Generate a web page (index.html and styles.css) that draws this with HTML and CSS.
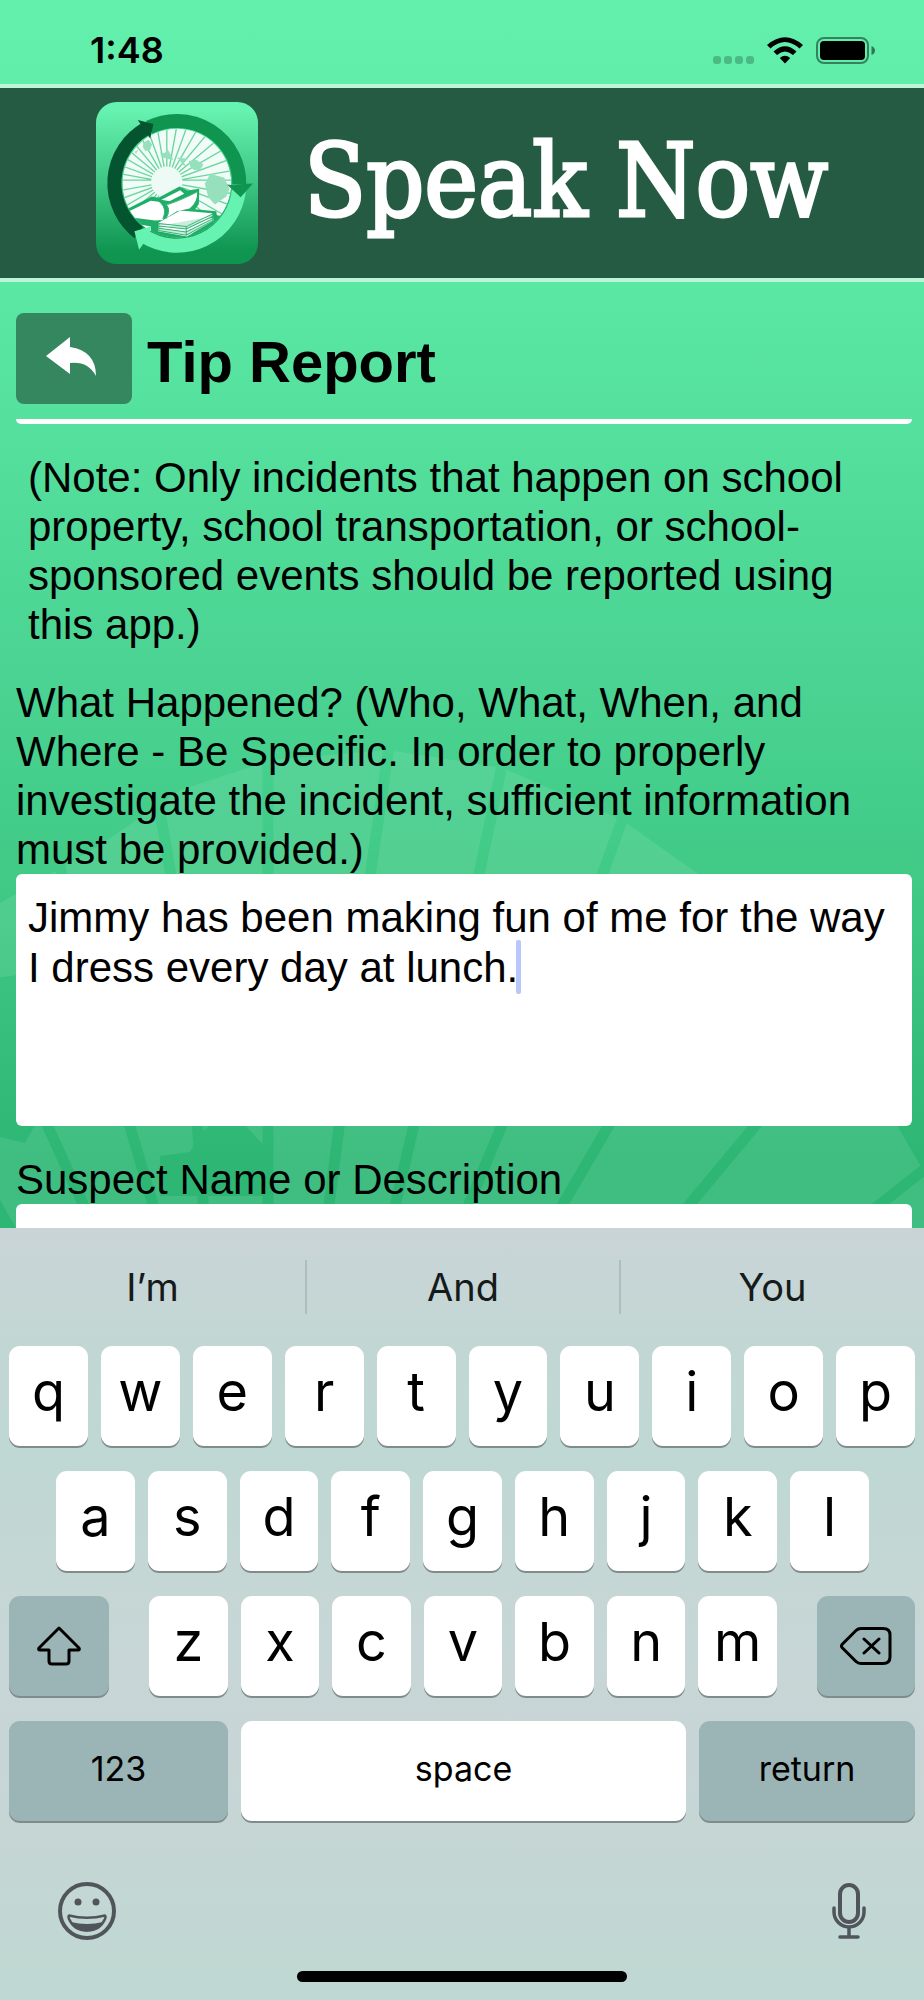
FILE: index.html
```html
<!DOCTYPE html>
<html lang="en">

<head>
    <meta charset="UTF-8">
    <meta name="viewport" content="width=device-width, initial-scale=1.0">
    <title>Speak Now - Tip Report</title>
    <link rel="stylesheet" href="styles.css">
</head>

<body>
    <div class="screen">
        <!-- faint sun rays behind the form -->
        <svg class="backdrop" viewBox="0 0 924 2000" preserveAspectRatio="xMidYMin slice" aria-hidden="true">
            <mask id="rays">
                <path fill="#fff" d="M-60 940L0 903 100 845 180 790 272 760 388 750 503 768 622 820 735 900 894 1120 920 1165 960 1228H-60Z" />
                <g stroke="#000" stroke-width="11" fill="none">
                    <path d="M268 740V1228M390 740L371 870 340 1120 326 1228M503 760L480 870 415 1120 390 1228M624 815L604 870 504 1120 459 1228M735 900L612 1120 549 1228M894 960L760 1120 670 1228M930 1165L850 1228" />
                    <path d="M158 800L170 870 197 1120 205 1228M50 830L128 1120 160 1228M-20 960L45 1120 94 1228" />
                </g>
                <path fill="#000" d="M-60 985L17 975 38 1120 25 1143 0 1137H-60ZM0 1200L16 1228H0ZM200 1134L222 1115H236L265 1147V1196H160V1156L190 1152Z" />
            </mask>
            <rect width="924" height="1228" fill="#fff" fill-opacity="0.09" mask="url(#rays)" />
        </svg>

        <div class="status-bar">
            <span class="time">1:48</span>
            <div class="status-icons">
                <span class="signal"><i></i><i></i><i></i><i></i></span>
                <svg class="wifi" width="36" height="27" viewBox="0 0 36 27">
                    <path d="M0 8Q18-7.500 36 8L32.500 11.500Q18-1.500 3.500 11.500ZM6.500 14.500Q18 4 29.500 14.500L26 18Q18 11 10 18ZM12.800 21Q18 16.500 23.200 21L18 26.500Z" />
                </svg>
                <svg class="battery" width="60" height="27" viewBox="0 0 60 27">
                    <rect x="1" y="1" width="51" height="25" rx="7" fill="none" stroke="#000" stroke-opacity="0.45" stroke-width="2" />
                    <rect x="4" y="4" width="45" height="19" rx="4" />
                    <path d="M55.500 9Q59 10.500 59 13.500T55.500 18Z" fill-opacity="0.5" />
                </svg>
            </div>
        </div>

        <header class="header">
            <svg class="logo" viewBox="48 35 485 485" role="img" aria-label="Speak Now logo">
                <defs>
                    <linearGradient id="tile" x1="0" y1="0" x2="0" y2="1">
                        <stop offset="0.050" stop-color="#66f2b0" />
                        <stop offset="0.500" stop-color="#3dc584" />
                        <stop offset="0.920" stop-color="#0f9550" />
                    </linearGradient>
                    <clipPath id="disc">
                        <circle cx="290" cy="278" r="163" />
                    </clipPath>
                </defs>
                <rect x="48" y="35" width="485" height="485" rx="62" fill="url(#tile)" />
                <g clip-path="url(#disc)">
                    <circle cx="290" cy="278" r="163" fill="#f1fbf7" />
                    <g transform="translate(260 275)" stroke="#69d69d" stroke-width="4">
                        <path d="M-240-6H240M0-240V240M-236-42L236 42M-226-82L226 82M-208-120L208 120M-184-154L184 154M-154-184L154 184M-120-208L120 208M-82-226L82 226M-42-236L42 236M236-42L-236 42M226-82L-226 82M208-120L-208 120M184-154L-184 154M154-184L-154 184M120-208L-120 208M82-226L-82 226M42-236L-42 236" />
                    </g>
                    <circle cx="260" cy="275" r="47" fill="#eefaf5" />
                    <!-- islands -->
                    <path fill="#96e0bd" d="M190 156L205 148 216 162 210 178 196 182 188 170ZM240 186L254 188 262 176 270 190 280 208 262 206 244 200ZM290 202L320 204 318 210 308 212 318 228 306 222 300 210ZM326 212L348 208 370 222 358 240 340 238 330 228ZM164 184L175 178 168 190ZM390 250L432 262 448 295 438 318 404 342 384 320 374 280Z" />
                    <!-- books -->
                    <path fill="#1fae68" d="M140 356L215 318 235 322 298 288 322 300 357 295 356 340 345 356 408 362 410 374 440 378 410 400 400 460H210L212 424 150 404Z" />
                    <path fill="#fff" d="M130 370L212 331 236 334Q262 352 248 388L225 390 150 380ZM244 328L300 299 312 310 268 332ZM260 342Q300 330 351 304 352 336 328 354L290 362 256 384Q274 360 260 342ZM236 396L300 360 396 368 400 390 320 438 234 422ZM180 402L212 408V424Z" />
                    <path fill="#c8eedb" stroke="#35b377" stroke-width="3" d="M236 399L318 408 398 370V390L318 434 236 420ZM236 406L318 415 398 377M236 413L318 424 398 384M318 408V434" />
                    <path fill="none" stroke="#35b377" stroke-width="3" d="M240 334Q262 354 248 386M254 338Q274 358 258 384M262 342Q300 330 351 304" />
                </g>
                <g fill="none" stroke-width="42">
                    <path stroke="#0f9550" d="M207 111A187 187 0 0 1 477 282" />
                    <path stroke="#66f2b0" d="M476 300A187 187 0 0 1 190 436" />
                    <path stroke="#04552f" d="M176 426A187 187 0 0 1 196 116" />
                </g>
                <path fill="#04552f" d="M173 89L220 101 210 144 199 126Z" />
                <path fill="#0f9550" d="M440 282L460 284 500 280 518 279 481 320Z" />
                <path fill="#66f2b0" d="M163 422L212 408 207 438 191 458 177 477Z" />
            </svg>
            <span class="brand">Speak Now</span>
        </header>

        <main class="form-area">
            <div class="page-title">
                <button class="back" type="button" aria-label="Back">
                    <svg width="52" height="40" viewBox="0 0 52 40">
                        <path fill="#fff" d="M0 19L24 0V10Q50 14 50 39 42 24 24 26V37Z" />
                    </svg>
                </button>
                <h1>Tip Report</h1>
            </div>
            <hr>
            <p class="note">(Note: Only incidents that happen on school property, school transportation, or school-sponsored events should be reported using this app.)</p>

            <label for="what">What Happened? (Who, What, When, and Where - Be Specific. In order to properly investigate the incident, sufficient information must be provided.)</label>
            <div class="field">
                <textarea id="what">Jimmy has been making fun of me for the way I dress every day at lunch.</textarea>
                <span class="caret"></span>
            </div>

            <label for="suspect">Suspect Name or Description</label>
            <input id="suspect" type="text">
        </main>

        <div class="keyboard">
            <div class="suggestions">
                <button type="button">I’m</button>
                <button type="button">And</button>
                <button type="button">You</button>
            </div>
            <div class="keys">
                <div class="row">
                    <button type="button">q</button>
                    <button type="button">w</button>
                    <button type="button">e</button>
                    <button type="button">r</button>
                    <button type="button">t</button>
                    <button type="button">y</button>
                    <button type="button">u</button>
                    <button type="button">i</button>
                    <button type="button">o</button>
                    <button type="button">p</button>
                </div>
                <div class="row row-home">
                    <button type="button">a</button>
                    <button type="button">s</button>
                    <button type="button">d</button>
                    <button type="button">f</button>
                    <button type="button">g</button>
                    <button type="button">h</button>
                    <button type="button">j</button>
                    <button type="button">k</button>
                    <button type="button">l</button>
                </div>
                <div class="row-shift">
                    <button class="fn" type="button" aria-label="Shift">
                        <svg width="46" height="40" viewBox="0 0 46 40" fill="none" stroke="#000" stroke-width="3" stroke-linejoin="round">
                            <path d="M23 2L43 22Q44 24 42 24H33V35Q33 38 30 38H16Q13 38 13 35V24H4Q2 24 3 22Z" />
                        </svg>
                    </button>
                    <div class="row">
                        <button type="button">z</button>
                        <button type="button">x</button>
                        <button type="button">c</button>
                        <button type="button">v</button>
                        <button type="button">b</button>
                        <button type="button">n</button>
                        <button type="button">m</button>
                    </div>
                    <button class="fn" type="button" aria-label="Delete">
                        <svg width="52" height="38" viewBox="0 0 52 38" fill="none" stroke="#000" stroke-width="3" stroke-linecap="round" stroke-linejoin="round">
                            <path d="M21 1.500H43Q50 1.500 50 8V30Q50 36.500 43 36.500H21Q18 36.500 16 34.500L2 20.500Q1 19 2 17.500L16 3.500Q18 1.500 21 1.500ZM24 12L39 26M39 12L24 26" />
                        </svg>
                    </button>
                </div>
                <div class="row-space">
                    <button class="fn" type="button">123</button>
                    <button type="button">space</button>
                    <button class="fn" type="button">return</button>
                </div>
            </div>
            <div class="dock">
                <button type="button" aria-label="Emoji">
                    <svg width="58" height="58" viewBox="0 0 58 58">
                        <circle cx="29" cy="29" r="27" fill="none" stroke="#50555c" stroke-width="4" />
                        <circle cx="20" cy="20" r="3.500" fill="#50555c" />
                        <circle cx="38" cy="20" r="3.500" fill="#50555c" />
                        <path d="M11 33.500Q29 38 47 33.500 48 34 47 37 42 48.500 29 48.500T11 37Q10 34 11 33.500Z" fill="none" stroke="#50555c" stroke-width="2.500" stroke-linejoin="round" />
                        <path d="M13 40Q29 44 45 40 40 49.500 29 49.500T13 40Z" fill="#50555c" />
                    </svg>
                </button>
                <button type="button" aria-label="Dictate">
                    <svg width="34" height="56" viewBox="0 0 34 56" fill="none" stroke="#50555c" stroke-width="4" stroke-linecap="round">
                        <rect x="8" y="2" width="18" height="37" rx="9" />
                        <path d="M2 25V29A15 15 0 0 0 32 29V25M17 45V53M8 54H26" stroke-width="3.500" />
                    </svg>
                </button>
            </div>
            <div class="home-indicator"></div>
        </div>
    </div>
</body>

</html>
```

FILE: styles.css
```css
* {
    box-sizing: border-box;
}

body {
    margin: 0;
    font-family: "Liberation Sans", Arial, sans-serif;
    color: #000;
}

button {
    margin: 0;
    padding: 0;
    border: 0;
    background: none;
    color: inherit;
    font: inherit;
}

svg {
    display: block;
}

.screen {
    position: relative;
    display: flex;
    flex-direction: column;
    height: 100vh;
    overflow: hidden;
    background: linear-gradient(#63f0ac 0%, #5ceaa5 12%, #4bd493 33%, #40ca86 44%, #2eb774 58%, #2eb774 100%);
}

.backdrop {
    position: absolute;
    top: 0;
    left: 0;
    width: 100%;
    height: 100%;
}

.status-bar,
.header,
.form-area,
.keyboard {
    position: relative;
}

/* status bar */

.status-bar {
    display: flex;
    justify-content: space-between;
    align-items: center;
    height: 84px;
    padding: 16px 48px 0 90px;
    flex-shrink: 0;
}

.time {
    font-family: Inter, sans-serif;
    font-size: 36px;
    font-weight: 600;
}

.status-icons {
    display: flex;
    align-items: flex-end;
}

.signal {
    display: flex;
    gap: 3px;
    margin-right: 13px;
}

.signal i {
    width: 8px;
    height: 8px;
    border-radius: 3px;
    background: rgba(0, 0, 0, 0.22);
}

.wifi {
    margin-right: 13px;
}

/* header */

.header {
    display: flex;
    justify-content: center;
    align-items: center;
    gap: 46px;
    height: 198px;
    flex-shrink: 0;
    border-top: 4px solid #bdf5d9;
    border-bottom: 4px solid #bdf5d9;
    background: #255b42;
}

.logo {
    width: 162px;
    height: 162px;
}

.brand {
    padding-bottom: 4px;
    font-family: "DejaVu Serif Condensed", "DejaVu Serif", serif;
    font-size: 101px;
    line-height: 120px;
    color: #fff;
    -webkit-text-stroke: 3px #fff;
    white-space: nowrap;
}

/* form */

.form-area {
    flex: 1;
    min-height: 0;
    overflow: hidden;
    padding: 31px 12px 0 16px;
    font-size: 42px;
    line-height: 49px;
}

.page-title {
    display: flex;
    align-items: center;
    gap: 15px;
}

.back {
    display: flex;
    justify-content: center;
    align-items: center;
    width: 116px;
    height: 91px;
    padding: 0 4px 4px 0;
    border-radius: 8px;
    background: #35875f;
}

h1 {
    margin: 0;
    padding-top: 6px;
    font-size: 58px;
    line-height: 66px;
}

hr {
    height: 5px;
    margin: 15px 0 29px;
    border: 0;
    border-radius: 0 0 6px 6px;
    background: #fff;
}

.note {
    margin: 0 12px 29px;
}

label {
    display: block;
}

.field {
    position: relative;
    margin-bottom: 29px;
}

textarea,
input {
    display: block;
    width: 100%;
    border: 0;
    border-radius: 6px;
    outline: 0;
    background: #fff;
    color: #000;
    font-family: inherit;
    font-size: 42px;
    line-height: 50px;
}

textarea {
    height: 252px;
    padding: 19px 12px;
    overflow: hidden;
    resize: none;
}

input {
    height: 78px;
    padding: 0 12px;
}

.caret {
    position: absolute;
    top: 66px;
    left: 500px;
    width: 5px;
    height: 54px;
    border-radius: 2px;
    background: #b9c7fa;
}

/* keyboard */

.keyboard {
    height: 772px;
    flex-shrink: 0;
    background: linear-gradient(#cad4d7 0%, #c2d7d4 15%, #bfd8d3 29%, #c7d6d6 53%, #c8d5d6 68%, #bfd8d2 100%);
    font-family: Inter, sans-serif;
}

.suggestions {
    display: grid;
    grid-template-columns: 33fr 34fr 33fr;
    align-items: center;
    height: 118px;
}

.suggestions button {
    height: 54px;
    color: #151a1a;
    font-size: 38px;
}

.suggestions button + button {
    border-left: 2px solid #adbebe;
}

.keys {
    display: flex;
    flex-direction: column;
    gap: 25px;
    padding: 0 9px;
}

.keys button {
    display: flex;
    justify-content: center;
    align-items: center;
    height: 100px;
    border-radius: 11px;
    background: #fff;
    box-shadow: 0 2px #808c8c;
}

.keys .fn {
    background: #9bb4b5;
}

.row {
    display: flex;
    gap: 13px;
}

.row button {
    flex: 1;
    padding-bottom: 10px;
    font-size: 54px;
}

.row-home {
    padding: 0 46px 0 47px;
}

.row-shift {
    display: grid;
    grid-template-columns: 100fr 628fr 98fr;
    gap: 40px;
}

.row-space {
    display: grid;
    grid-template-columns: 219fr 445fr 216fr;
    gap: 13px;
    font-size: 34px;
}

.row-space button {
    padding-bottom: 6px;
}

.dock {
    display: flex;
    justify-content: space-between;
    align-items: center;
    height: 58px;
    margin: 61px 58px 0;
}

.home-indicator {
    width: 330px;
    height: 11px;
    margin: 31px auto 0;
    border-radius: 6px;
    background: #000;
}
```
